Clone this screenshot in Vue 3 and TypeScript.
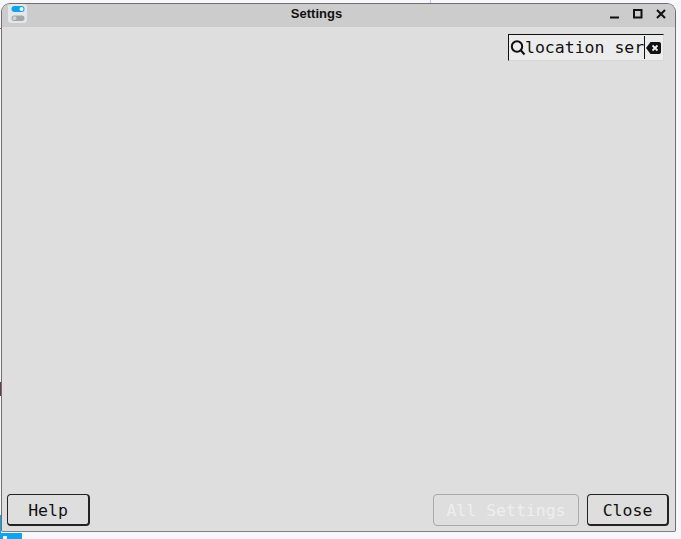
<template>
  <div class="desktop">
    <div class="window">
      <header class="titlebar">
        <div class="app-icon">
          <svg width="18" height="18" viewBox="0 0 18 18">
            <rect x="2.500" y="1" width="13" height="6" rx="3" fill="#0ea5e9" />
            <circle cx="12.500" cy="4" r="2" fill="#fff" />
            <rect x="2.500" y="10.500" width="13" height="5.500" rx="2.700" fill="#a3a6aa" />
            <circle cx="5.500" cy="13.200" r="1.900" fill="#d2d4d7" />
          </svg>
        </div>
        <span class="title">Settings</span>
        <div class="controls">
          <svg width="10" height="10" viewBox="0 0 10 10"><path d="M0 8.500h9" stroke="#111" stroke-width="2" /></svg>
          <svg width="10" height="10" viewBox="0 0 10 10"><rect x="1" y="1" width="7.500" height="7.500" fill="none" stroke="#111" stroke-width="2" /></svg>
          <svg width="10" height="10" viewBox="0 0 10 10"><path d="M1 1l8 8M9 1l-8 8" stroke="#111" stroke-width="2" /></svg>
        </div>
      </header>

      <main class="content">
        <div class="search-row">
          <div class="search">
            <svg class="search-icon" width="16" height="16" viewBox="0 0 16 16">
              <circle cx="7" cy="6.500" r="5.200" fill="none" stroke="#111" stroke-width="2" />
              <path d="M10.500 10l4 4.500" stroke="#111" stroke-width="2" />
            </svg>
            <span class="query">location ser</span>
            <span class="caret"></span>
            <svg class="clear-icon" width="15" height="12" viewBox="0 0 15 12">
              <path d="M4.500 0h8.500a2 2 0 0 1 2 2v8a2 2 0 0 1-2 2H4.500L0 6z" fill="#111" />
              <path d="M6.500 3.500l5 5M11.500 3.500l-5 5" stroke="#eee" stroke-width="1.800" />
            </svg>
          </div>
        </div>
        <div class="actions">
          <button class="btn">Help</button>
          <span class="spacer"></span>
          <button class="btn disabled" disabled>All Settings</button>
          <button class="btn">Close</button>
        </div>
      </main>
    </div>
    <div class="taskbar-corner"><span class="corner-glyph"></span></div>
    <div class="edge-mark blue"></div>
    <div class="edge-mark red"></div>
    <div class="edge-mark dark"></div>
    <div class="edge-mark top"></div>
  </div>
</template>

<script setup lang="ts">
</script>

<style>
body {
  background: #f6f6fb;
  overflow: hidden;
}
</style>

<style scoped>
.desktop {
  position: relative;
  width: 681px;
  height: 539px;
  box-sizing: border-box;
  padding: 3px 5px 7px 1px;
  background: #f6f6fb;
}

.window {
  height: 100%;
  box-sizing: border-box;
  display: flex;
  flex-direction: column;
  border: 1px solid #6f6f6f;
  border-bottom-color: #808080;
  border-radius: 9px 9px 2px 2px;
  background: #dedede;
  overflow: hidden;
}

.titlebar {
  display: flex;
  align-items: center;
  justify-content: center;
  position: relative;
  flex: 0 0 23px;
  box-sizing: border-box;
  padding: 0 44px 5px 0;
  background: #cccccc;
}

.app-icon {
  position: absolute;
  left: 6px;
  top: 0;
  width: 19px;
  height: 19px;
  display: flex;
  align-items: center;
  justify-content: center;
  border-radius: 3px;
  background: #e3e6ea;
}

.title {
  font: bold 13px "Liberation Sans", sans-serif;
  color: #111;
}

.controls {
  position: absolute;
  right: 9px;
  top: 5px;
  display: flex;
  gap: 13px;
}

.content {
  flex: 1;
  display: flex;
  flex-direction: column;
  justify-content: space-between;
  padding: 7px 6px 5px 5px;
}

.search-row {
  display: flex;
  justify-content: flex-end;
  padding-right: 5px;
}

.search {
  width: 156px;
  height: 27px;
  box-sizing: border-box;
  display: flex;
  align-items: center;
  position: relative;
  padding-left: 1px;
  border: 1px solid #d8d8d8;
  border-top-color: #111;
  border-left-color: #111;
  background: #ececec;
}

.search-icon {
  flex: none;
  margin-right: -1px;
}

.query {
  font: 16.500px "DejaVu Sans Mono", monospace;
  color: #111;
  white-space: nowrap;
}

.caret {
  width: 1px;
  height: 23px;
  background: #111;
}

.clear-icon {
  margin-left: 1px;
}

.actions {
  display: flex;
  gap: 8px;
}

.spacer {
  flex: 1;
}

.btn {
  height: 32px;
  width: 83px;
  padding: 1px 0 0;
  font: 16.500px "DejaVu Sans Mono", monospace;
  color: #111;
  background: #dedede;
  border: 1px solid #222;
  border-bottom-width: 2px;
  border-right-width: 2px;
  border-radius: 4px;
}

.btn.disabled {
  width: 146px;
  padding: 0;
  color: #eeeeee;
  border: 1px solid #aaaaaa;
}

.btn:last-child {
  width: 82px;
}

.taskbar-corner {
  position: absolute;
  left: 0;
  bottom: 0;
  width: 22px;
  height: 6px;
  overflow: hidden;
  background: #0ea5f0;
}

.corner-glyph {
  position: absolute;
  left: 3px;
  top: 3px;
  width: 4px;
  height: 3px;
  background: #f0f8ff;
}

.edge-mark {
  position: absolute;
  width: 1px;
}

.edge-mark.blue {
  left: 0;
  top: 515px;
  height: 18px;
  background: #0ea5f0;
}

.edge-mark.red {
  left: 0;
  top: 28px;
  height: 1px;
  background: #e05050;
}

.edge-mark.dark {
  left: 0;
  top: 382px;
  height: 14px;
  background: #6e3a44;
}

.edge-mark.top {
  left: 430px;
  top: 0;
  height: 3px;
  background: #b6c6dc;
}
</style>
